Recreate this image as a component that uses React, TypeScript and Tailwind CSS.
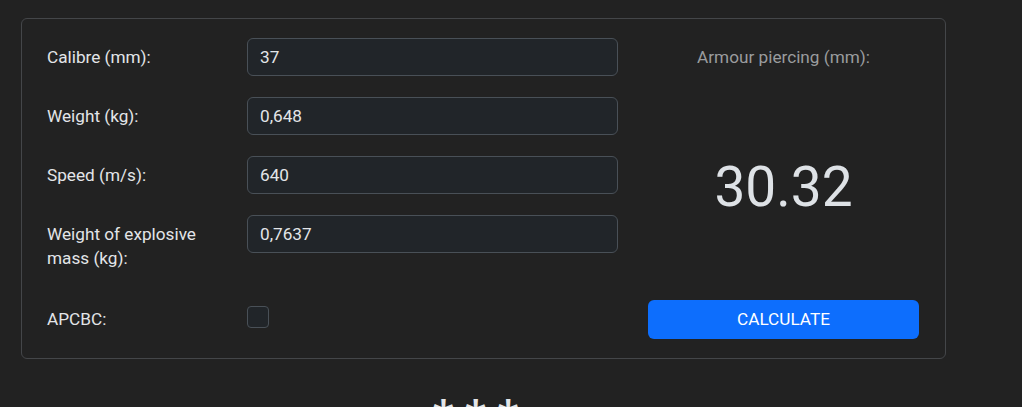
import { useState, type FC } from 'react';

const fields = [
  { label: 'Calibre (mm):', value: '37' },
  { label: 'Weight (kg):', value: '0,648' },
  { label: 'Speed (m/s):', value: '640' },
  { label: 'Weight of explosive mass (kg):', value: '0,7637' },
];

const App: FC = () => {
  const [values, setValues] = useState(fields.map((f) => f.value));
  const [apcbc, setApcbc] = useState(false);

  return (
    <div
      className="h-[407px] w-full overflow-hidden bg-[#222222] text-[#e3e5e8]"
      style={{ fontFamily: 'Roboto, "Liberation Sans", sans-serif' }}
    >
      <div className="pl-[21px] pt-[18px]">
        <div className="flex w-[925px] rounded-md border border-[#444649] pb-[19px] pl-[25px] pr-[26px] pt-[19px]">
          <div className="flex w-[571px] flex-col gap-[21px] pb-[3px]">
            {fields.map((field, index) => (
              <div className="flex items-start" key={index}>
                <label className="w-[200px] py-[7px] pr-[24px] text-[17.2px] leading-6">
                  {field.label}
                </label>
                <input
                  className="h-[38px] w-[371px] rounded-md border border-[#495057] bg-[#212529] px-3 text-[17.2px] text-[#e3e5e8] outline-none"
                  value={values[index]}
                  onChange={(e) => {
                    const next = [...values];
                    next[index] = e.target.value;
                    setValues(next);
                  }}
                />
              </div>
            ))}
            <div className="flex h-[38px] items-start">
              <label className="w-[200px] py-[9px] text-[17.2px] leading-6">APCBC:</label>
              <button
                type="button"
                onClick={() => setApcbc(!apcbc)}
                className="mt-[8px] h-[22px] w-[22px] rounded-[4px] border border-[#495057] bg-[#212529]"
              />
            </div>
          </div>
          <div className="ml-[30px] flex flex-1 flex-col items-center">
            <div className="mt-[7px] text-[17.2px] leading-6 text-[#9a9c9e]">Armour piercing (mm):</div>
            <div className="flex flex-1 items-center pt-[6px]">
              <span className="text-[55px] leading-none text-[#dee2e6]">30.32</span>
            </div>
            <button
              type="button"
              className="h-[39px] w-full rounded-md bg-[#0d6efd] text-[17.2px] text-white"
            >
              CALCULATE
            </button>
          </div>
        </div>
        <div className="w-[925px] pr-[16px] pt-[34px] text-center text-[46px] font-bold leading-none">
          * * *
        </div>
      </div>
    </div>
  );
};

export default App;
